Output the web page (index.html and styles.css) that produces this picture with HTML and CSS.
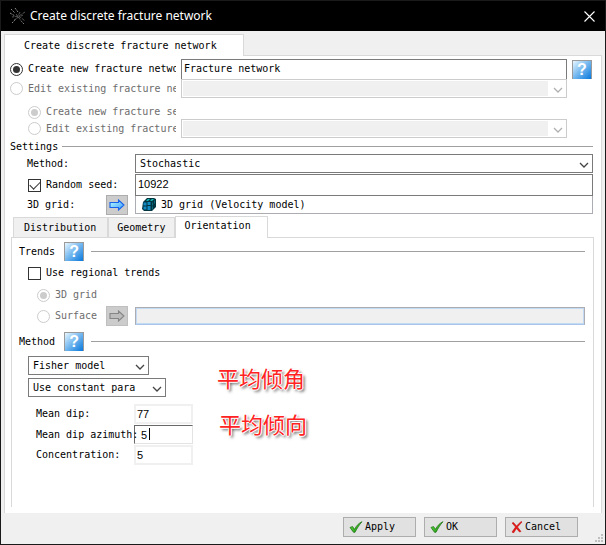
FILE: index.html
```html
<!DOCTYPE html>
<html lang="en">
<head>
<meta charset="utf-8">
<title>Create discrete fracture network</title>
<link rel="stylesheet" href="styles.css">
</head>
<body>
<svg class="defs" width="0" height="0" aria-hidden="true">
  <defs>
    <linearGradient id="blue" x1="0" y1="0" x2="1" y2="1"><stop offset="0" stop-color="#b9ffff"/><stop offset="1" stop-color="#3b9bff"/></linearGradient>
    <linearGradient id="green" x1="0" y1="0" x2="1" y2="1"><stop offset="0" stop-color="#6ee84a"/><stop offset="1" stop-color="#128a08"/></linearGradient>
    <symbol id="chevron" viewBox="0 0 10 6"><path d="M1 1l4 4 4-4" fill="none" stroke="currentColor" stroke-width="1.3"/></symbol>
    <symbol id="arrow" viewBox="0 0 16 12"><path d="M1 3.5h8.500V1L15 6l-5.500 5V8.500H1z" stroke="currentColor" stroke-width="1.1"/></symbol>
    <symbol id="tick" viewBox="0 0 14 12"><path d="M1 6.500l2.500-1 2 2.800C7.500 4.500 10 2 13 .7 10 4 8 7.500 6 11.300H4.500z" fill="url(#green)" stroke="#176b10" stroke-width=".7"/></symbol>
  </defs>
</svg>
<div class="window">
  <header class="titlebar">
    <svg class="app-icon" width="16" height="17" viewBox="0 0 16 17" fill="none" stroke-width="1">
      <path stroke="#888" d="M1 1l4 4M5 0l3 4M0 5l5 3M11 13l3 3M2 15l4-4" stroke-dasharray="2 1"/>
      <path stroke="#555" d="M15 4L9 8l-7 1M4 12l9-5M6 6l6 8M9 8l6 5M10 4l-3 6" stroke-dasharray="3 1"/>
    </svg>
    <h1>Create discrete fracture network</h1>
    <button class="close" aria-label="Close"><svg width="11" height="11" viewBox="0 0 11 11"><path d="M.5.5l10 10M10.500.5l-10 10" stroke="#fff" stroke-width="1.100"/></svg></button>
  </header>

  <main class="content">
    <nav class="main-tabs"><button class="main-tab">Create discrete fracture network</button></nav>
    <div class="page">
      <section class="source">
        <div class="row tall">
          <label class="choice"><input type="radio" name="net" checked><span>Create new fracture network</span></label>
          <input class="text" type="text" value="Fracture network" aria-label="Network name">
          <button class="help" aria-label="Help">?</button>
        </div>
        <div class="row">
          <label class="choice off"><input type="radio" name="net" disabled><span>Edit existing fracture network</span></label>
          <div class="drop off"><select disabled aria-label="Existing network"></select><svg><use href="#chevron"/></svg></div>
        </div>
        <div class="row nested spaced">
          <label class="choice off"><input type="radio" name="set" checked disabled><span>Create new fracture set</span></label>
        </div>
        <div class="row nested">
          <label class="choice off"><input type="radio" name="set" disabled><span>Edit existing fracture set</span></label>
          <div class="drop off"><select disabled aria-label="Existing set"></select><svg><use href="#chevron"/></svg></div>
        </div>
      </section>

      <h2 class="group">Settings</h2>
      <section class="settings">
        <label class="indent" for="method">Method:</label>
        <div class="drop"><select id="method"><option>Stochastic</option></select><svg><use href="#chevron"/></svg></div>
        <label class="choice indent"><input type="checkbox" checked><span>Random seed:</span></label>
        <input class="text seed" type="text" value="10922" aria-label="Seed">
        <div class="picker indent"><span>3D grid:</span><button class="pick" aria-label="Pick grid"><svg width="16" height="12" fill="url(#blue)"><use href="#arrow"/></svg></button></div>
        <div class="object">
          <svg width="14" height="13" viewBox="0 0 14 13"><path d="M1 4l4-4h7l2 1v8l-4 4H2L0 11z" fill="#00343f"/><path d="M1.500 4.500h3v3h-3zM5.500 4h3v3h-3zM1.500 8.500h3v3h-3zM5.500 8h3v4h-3z" fill="#1389c4"/><path d="M4 2.500L6 1h2L6 3zM8 2.500L10 1h2l-2 2z" fill="#18c7c4"/><path d="M10 5l1-1v3l-1 1zM12 3l1-1v3l-1 1zM10 9l1-1v3l-1 1z" fill="#0b6a80"/></svg>
          <span>3D grid (Velocity model)</span>
        </div>
      </section>

      <nav class="tabs">
        <button>Distribution</button><button>Geometry</button><button class="active">Orientation</button>
      </nav>
      <section class="pane">
        <div class="group with-help"><h2>Trends</h2><button class="help" aria-label="Help on trends">?</button></div>
        <label class="choice regional"><input type="checkbox"><span>Use regional trends</span></label>
        <label class="choice off trend"><input type="radio" name="trend" checked disabled><span>3D grid</span></label>
        <div class="surface">
          <label class="choice off"><input type="radio" name="trend" disabled><span>Surface</span></label>
          <button class="pick" disabled aria-label="Pick surface"><svg width="16" height="12" fill="#bcbcbc"><use href="#arrow"/></svg></button>
          <input class="text" type="text" disabled aria-label="Surface name">
        </div>
        <div class="group with-help"><h2>Method</h2><button class="help" aria-label="Help on method">?</button></div>
        <div class="models">
          <div class="drop fisher"><select aria-label="Model"><option>Fisher model</option></select><svg><use href="#chevron"/></svg></div>
          <div class="drop constant"><select aria-label="Parameter source"><option>Use constant para</option></select><svg><use href="#chevron"/></svg></div>
          <p class="note first" lang="zh">平均倾角</p>
          <p class="note second" lang="zh">平均倾向</p>
        </div>
        <div class="params">
          <label for="dip">Mean dip:</label><input id="dip" type="text" value="77">
          <label for="azimuth">Mean dip azimuth:</label><div class="editing"><input id="azimuth" type="text" value="5"><i class="caret"></i></div>
          <label for="conc">Concentration:</label><input id="conc" type="text" value="5">
        </div>
      </section>
    </div>
  </main>

  <footer class="actions">
    <button><svg width="14" height="12"><use href="#tick"/></svg>Apply</button>
    <button><svg width="14" height="12"><use href="#tick"/></svg>OK</button>
    <button><svg width="12" height="12" viewBox="0 0 12 12"><path d="M1 2l1.500-.5L5.500 5 10 .5l1 .5-4.500 5L10 10.500l-1.500.5-3-3.500L2.500 12 1 11l3.500-5z" fill="#e81515" stroke="#b80808" stroke-width=".5"/></svg>Cancel</button>
    <svg class="grip" width="8" height="8" viewBox="0 0 8 8"><path d="M6 0h2v2H6zM3 3h2v2H3zM6 3h2v2H6zM0 6h2v2H0zM3 6h2v2H3zM6 6h2v2H6z" fill="#bfbfbf"/></svg>
  </footer>
</div>
</body>
</html>
```
FILE: styles.css
```css
* { box-sizing: border-box; }
body { margin: 0; font: 10px/14px "DejaVu Sans Mono", "Liberation Mono", monospace; color: #000; }
button, input, select { font: inherit; color: inherit; margin: 0; padding: 0; border-radius: 0; }
button { display: flex; align-items: center; justify-content: center; }
h1, h2, p { margin: 0; font-weight: 400; font-size: inherit; }
.defs { position: absolute; }

.window { min-height: 100vh; display: flex; flex-direction: column; background: #f0f0f0; border: 1px solid #1a1a1a; }
.titlebar { display: flex; align-items: center; gap: 4px; height: 30px; padding: 0 10px 0 9px; background: #000; color: #fff; }
.titlebar h1 { flex: 1; font: 12px/18px "Noto Sans", sans-serif; }
.close { border: 0; background: none; }

.content { flex: 1; display: flex; flex-direction: column; padding: 3px 3px 0; }
.main-tabs { display: flex; }
.main-tab { height: 22px; width: 240px; padding: 0 0 0 19px; justify-content: flex-start; background: #fff; border: 1px solid #d9d9d9; border-bottom: 0; margin-bottom: -1px; z-index: 1; }
.page { flex: 1; display: flex; flex-direction: column; background: #fff; border: 1px solid #d9d9d9; border-bottom: 0; padding: 3px 8px 6px 5px; }

.row { display: grid; grid-template-columns: 171px minmax(0, 386px) 20px; align-items: center; height: 19px; }
.row.tall { height: 20px; }
.row.tall .help { margin-left: 5px; }
.row.nested { padding-left: 18px; grid-template-columns: 153px minmax(0, 386px); }
.row.spaced { height: 20px; margin-top: 1px; align-items: end; }
.choice { display: flex; align-items: center; gap: 5px; min-width: 0; margin-right: 5px; }
.choice span { overflow: hidden; white-space: nowrap; }
.off { color: #6d6d6d; }

input[type="radio"], input[type="checkbox"] { appearance: none; flex: none; width: 13px; height: 13px; border: 1px solid #333; background: #fff; display: grid; place-items: center; }
input[type="radio"] { border-radius: 50%; }
input[type="radio"]:checked::after { content: ""; width: 7px; height: 7px; border-radius: 50%; background: #333; }
input[type="checkbox"]:checked::after { content: ""; width: 9px; height: 5px; border: solid #333; border-width: 0 0 1px 1px; transform: translateY(-1px) rotate(-45deg); }
input[type="radio"]:disabled { border-color: #ccc; }
input[type="radio"]:disabled:checked::after { background: #ccc; }

.text { width: 100%; height: 22px; padding: 0 2px 2px; border: 1px solid #7a7a7a; background: #fff; }
.row .text { height: 20px; border-bottom: 0; }
.seed, .params input { font: 11px/14px "Liberation Sans", sans-serif; }
.help { width: 20px; height: 19px; border: 1px solid #9a9a9a; border-bottom: 0; background: linear-gradient(135deg, #e8f6ff 0%, #7cbcf0 45%, #0878dc 100%); color: #fff; font: bold 16px/18px "Liberation Sans", sans-serif; }

.drop { position: relative; display: flex; height: 19px; border: 1px solid #7a7a7a; background: #fff; }
.drop select { appearance: none; flex: 1; min-width: 0; padding: 0 16px 0 4px; border: 0; background: none; }
.drop svg { position: absolute; right: 3px; top: 7px; width: 10px; height: 6px; color: #444; pointer-events: none; }
.drop.off { border-color: #ccc; padding: 1px 18px 1px 1px; }
.drop.off select { background: #f0f0f0; opacity: 1; }
.drop.off svg { color: #b0b0b0; }

.group { display: flex; align-items: center; gap: 4px; }
.group::after { content: ""; flex: 1; height: 1px; background: #a0a0a0; }
h2.group { height: 15px; margin-top: 1px; }
.settings { display: grid; grid-template-columns: 125px 1fr; align-items: center; padding-bottom: 2px; }
.indent { margin-left: 17px; }
.choice.indent { margin-left: 18px; }
.settings .drop { margin-bottom: 1px; }
.object { display: flex; align-items: center; gap: 5px; height: 18px; padding-left: 6px; border: 1px solid #abadb3; border-top: 0; }
.picker { display: flex; align-items: center; justify-content: space-between; height: 18px; margin-right: 7px; }
.pick { width: 22px; height: 20px; border: 1px solid #adadad; background: #ccc; color: #1762e8; }
.pick:disabled { background: #ccc; border-color: #bfbfbf; color: #858585; }

.tabs { display: flex; align-items: flex-end; height: 22px; margin-left: 3px; margin-bottom: -1px; z-index: 1; }
.tabs button { height: 20px; margin-bottom: 1px; padding: 0 11px 0 10px; border: 1px solid #d9d9d9; border-bottom-width: 0; background: #f0f0f0; }
.tabs button:nth-child(2) { padding: 0 9px 0 8px; }
.tabs button.active { height: 22px; margin: 0; padding: 0 16px 3px 8px; background: #fff; }
.pane { flex: 1; display: flex; flex-direction: column; margin: 0 -1px 0 1px; padding: 4px 8px 0 7px; border: 1px solid #d9d9d9; border-bottom: 0; }
.with-help { gap: 7px; height: 19px; }
.with-help .help { margin-left: 2px; }
.regional { margin: 5px 0 0 9px; }
.trend { margin: 8px 0 0 18px; }
.surface { display: grid; grid-template-columns: 87px 29px 1fr; align-items: center; margin: 4px 0 6px; }
.surface .choice { margin: 0 0 0 18px; }
.surface .text { height: 18px; border-color: #abadb3 #abadb3 #a9c5e8; background: #f0f0f0; box-shadow: inset 0 0 0 1px #c3daf5; }
.models { position: relative; display: flex; flex-direction: column; gap: 3px; margin: 5px 0 7px 9px; }
.fisher { width: 121px; }
.constant { width: 138px; }
.note { position: absolute; font: 22px/28px "Noto Sans CJK SC", sans-serif; color: #f22; text-shadow: 1px 0 #fff, -1px 0 #fff, 0 1px #fff, 0 -1px #fff, 2px 2px 3px #444; }
.first { left: 189px; top: 7px; }
.second { left: 191px; top: 53px; }
.params { display: grid; grid-template-columns: 98px 59px; row-gap: 1px; align-items: center; margin-left: 17px; }
.params label { white-space: nowrap; z-index: 1; }
.params input { width: 100%; height: 20px; padding: 0 1px; border: 2px solid #f0f0f0; background: #fff; }
.editing { position: relative; display: flex; }
.params .editing input { height: 19px; padding-left: 6px; border: 1px solid #e3e3e3; border-top-color: #696969; border-left-color: #696969; }
.caret { position: absolute; left: 15px; top: 3px; width: 1px; height: 12px; background: #000; }

.actions { position: relative; display: flex; justify-content: flex-end; gap: 8px; padding: 4px 27px 7px; }
.actions button { width: 73px; height: 20px; padding-left: 5px; gap: 2px; justify-content: flex-start; border: 1px solid #adadad; background: #e1e1e1; }
.grip { position: absolute; right: 2px; bottom: 2px; }
```
